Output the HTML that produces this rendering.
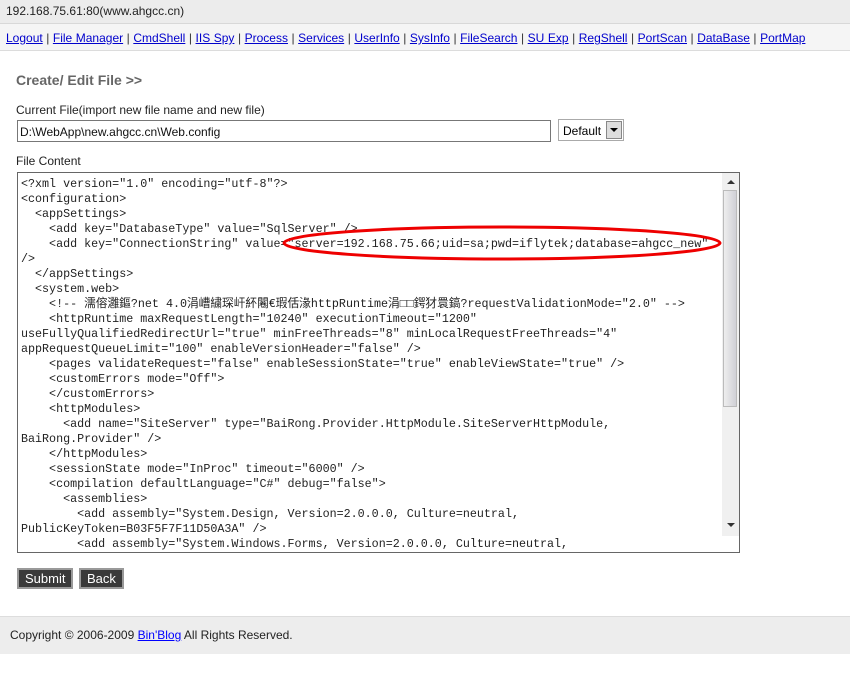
<!DOCTYPE html>
<html><head><meta charset="utf-8"><style>
body{margin:0;width:850px;height:685px;background:#fff;font-family:"Liberation Sans",Arial,sans-serif;font-size:12px;position:relative;overflow:hidden}
.top{position:absolute;left:0;top:0;width:850px;height:23px;background:#ececec;border-bottom:1px solid #d8d8d8}
.top span{position:absolute;left:6px;top:4px;color:#222}
.nav{position:absolute;left:0;top:24px;width:850px;height:26px;background:#f5f5f5;border-bottom:1px solid #dcdcdc}
.nav div{position:absolute;left:6px;top:7px;color:#333;word-spacing:0.2px}
.nav a{color:#00c;text-decoration:underline}
h2{position:absolute;left:16px;top:72px;margin:0;font-size:14px;color:#666;font-weight:bold}
.lbl{position:absolute;left:16px;color:#222}
.inp{position:absolute;left:17px;top:120px;width:534px;height:22px;border:1px solid #777;box-sizing:border-box;padding:4px 2px;color:#111}
.sel{position:absolute;left:558px;top:119px;width:66px;height:22px;border:1px solid #aaa;box-sizing:border-box}
.sel span{position:absolute;left:4px;top:4px}
.sel i{position:absolute;right:1px;top:1px;width:16px;height:18px;background:#ddd;border:1px solid #888;box-sizing:border-box}
.sel i:after{content:"";position:absolute;left:3px;top:6px;border:4px solid transparent;border-top:4px solid #000}
.ta{position:absolute;left:17px;top:172px;width:723px;height:381px;border:1px solid #666;box-sizing:border-box;overflow:hidden}
pre{margin:0;position:absolute;left:3px;top:4px;font-family:"Liberation Mono","Noto Sans CJK SC",monospace;font-size:11.7px;line-height:15px;color:#222}
.sb{position:absolute;left:704px;top:0;width:17px;height:363px;background:#f0f0f0}
.th{position:absolute;left:1px;top:17px;width:14px;height:217px;background:linear-gradient(90deg,#eee,#d0d0d6);border:1px solid #bbb;box-sizing:border-box}
.up,.dn{position:absolute;left:5px;border:4px solid transparent}
.up{top:3px;border-bottom:4px solid #333}
.dn{top:350px;border-top:4px solid #333}
.btn{position:absolute;top:568px;height:21px;background:#3a3a3a;color:#fff;border:2px solid #999;box-sizing:border-box;font-size:13px;padding:1px 6px}
.foot{position:absolute;left:0;top:616px;width:850px;height:37px;background:#ededed;border-top:1px solid #ddd}
.foot div{position:absolute;left:10px;top:11px;color:#222}
.foot a{color:#00f}
</style></head><body>
<div class="top"><span>192.168.75.61:80(www.ahgcc.cn)</span></div>
<div class="nav"><div><a>Logout</a> | <a>File Manager</a> | <a>CmdShell</a> | <a>IIS Spy</a> | <a>Process</a> | <a>Services</a> | <a>UserInfo</a> | <a>SysInfo</a> | <a>FileSearch</a> | <a>SU Exp</a> | <a>RegShell</a> | <a>PortScan</a> | <a>DataBase</a> | <a>PortMap</a></div></div>
<h2>Create/ Edit File &gt;&gt;</h2>
<div class="lbl" style="top:103px">Current File(import new file name and new file)</div>
<div class="inp">D:\WebApp\new.ahgcc.cn\Web.config</div>
<div class="sel"><span>Default</span><i></i></div>
<div class="lbl" style="top:154px">File Content</div>
<div class="ta"><pre>&lt;?xml version="1.0" encoding="utf-8"?&gt;
&lt;configuration&gt;
  &lt;appSettings&gt;
    &lt;add key="DatabaseType" value="SqlServer" /&gt;
    &lt;add key="ConnectionString" value="server=192.168.75.66;uid=sa;pwd=iflytek;database=ahgcc_new"
/&gt;
  &lt;/appSettings&gt;
  &lt;system.web&gt;
    &lt;!-- 濡傛灉鏂?net 4.0涓嶆繍琛屽紑闂€瑕佸湪httpRuntime涓□□鍔犲睘鎬?requestValidationMode="2.0" --&gt;
    &lt;httpRuntime maxRequestLength="10240" executionTimeout="1200"
useFullyQualifiedRedirectUrl="true" minFreeThreads="8" minLocalRequestFreeThreads="4"
appRequestQueueLimit="100" enableVersionHeader="false" /&gt;
    &lt;pages validateRequest="false" enableSessionState="true" enableViewState="true" /&gt;
    &lt;customErrors mode="Off"&gt;
    &lt;/customErrors&gt;
    &lt;httpModules&gt;
      &lt;add name="SiteServer" type="BaiRong.Provider.HttpModule.SiteServerHttpModule,
BaiRong.Provider" /&gt;
    &lt;/httpModules&gt;
    &lt;sessionState mode="InProc" timeout="6000" /&gt;
    &lt;compilation defaultLanguage="C#" debug="false"&gt;
      &lt;assemblies&gt;
        &lt;add assembly="System.Design, Version=2.0.0.0, Culture=neutral,
PublicKeyToken=B03F5F7F11D50A3A" /&gt;
        &lt;add assembly="System.Windows.Forms, Version=2.0.0.0, Culture=neutral,</pre>
<div class="sb"><div class="up"></div><div class="th"></div><div class="dn"></div></div>
</div>
<svg style="position:absolute;left:0;top:0" width="850" height="685"><ellipse cx="502" cy="243" rx="218" ry="16" fill="none" stroke="#e00" stroke-width="3"/></svg>
<div class="btn" style="left:17px">Submit</div>
<div class="btn" style="left:79px">Back</div>
<div class="foot"><div>Copyright © 2006-2009 <a><u>Bin'Blog</u></a> All Rights Reserved.</div></div>
</body></html>
